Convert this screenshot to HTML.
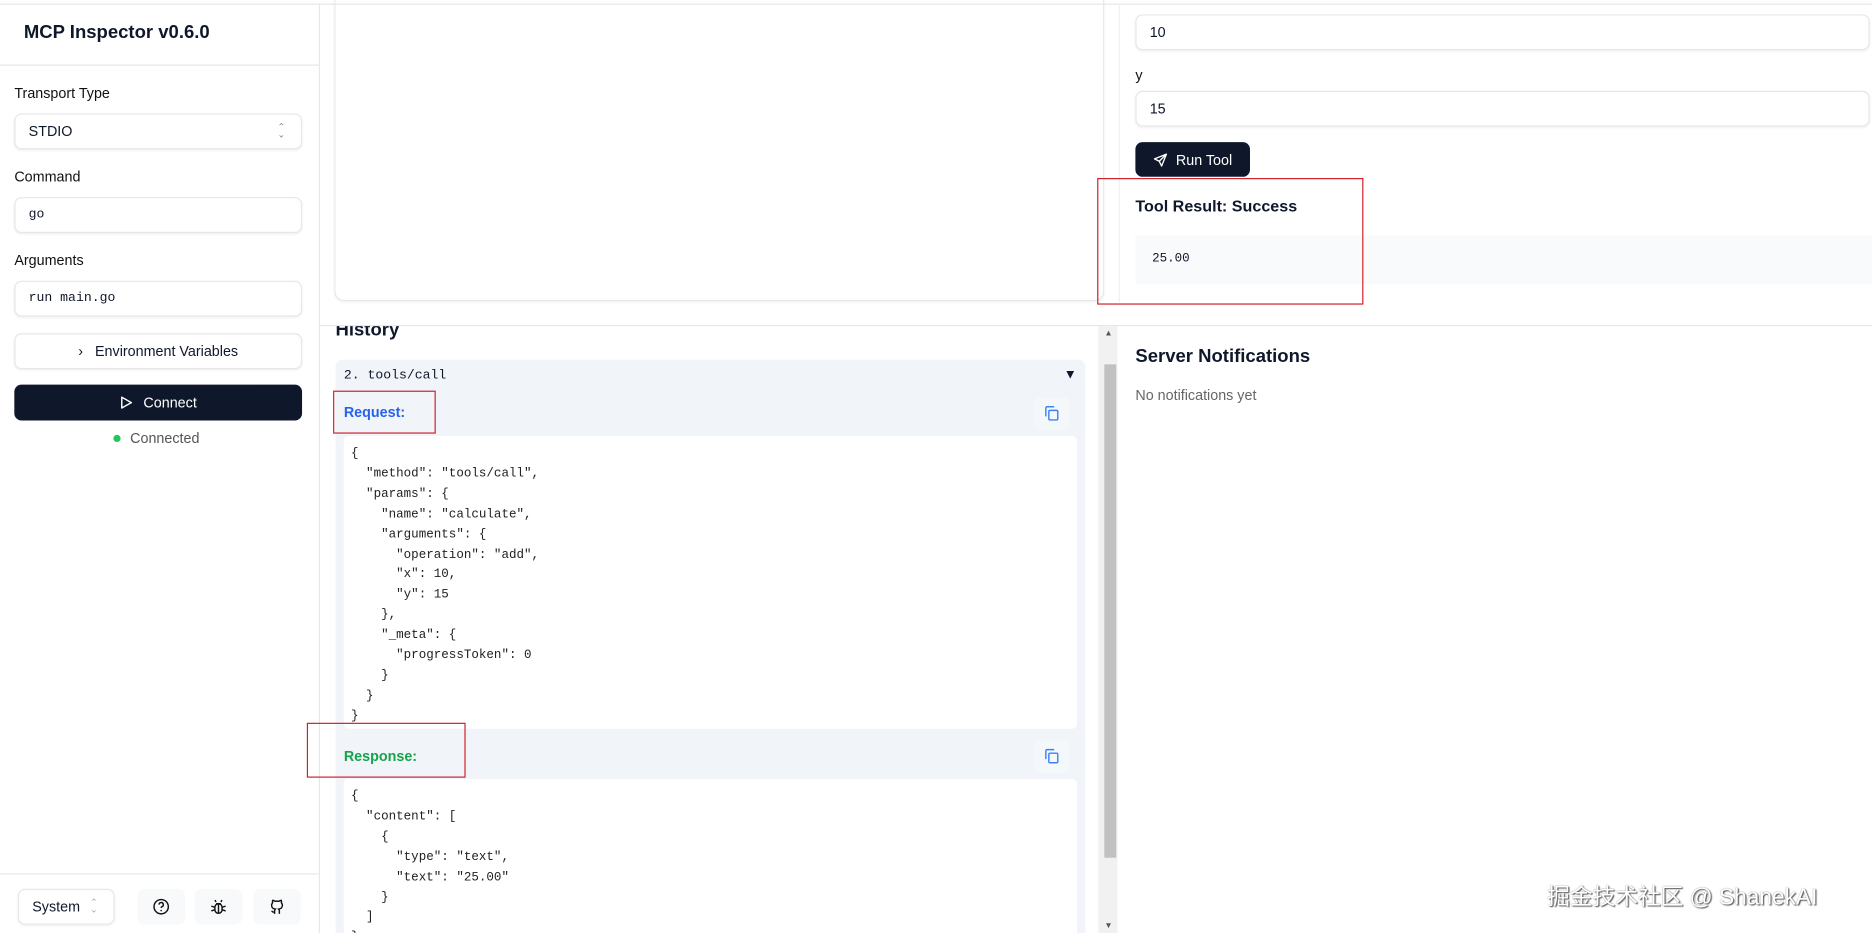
<!DOCTYPE html>
<html><head><meta charset="utf-8"><style>
html,body{margin:0;padding:0;width:1872px;height:933px;overflow:hidden;background:#fff}
#w{position:absolute;left:0;top:0;width:1568px;height:781px;transform:scale(1.19388,1.19462);transform-origin:0 0;font-family:"Liberation Sans",sans-serif;color:#0f172a;overflow:hidden}
.a{position:absolute}
.lbl{font-size:12px;color:#111}
.inp{position:absolute;border:1px solid #e5e7eb;border-radius:6px;box-shadow:0 1px 2px rgba(0,0,0,.06);background:#fff;box-sizing:border-box;font-size:12px;padding-left:11px;display:flex;align-items:center}
.mono{font-family:"Liberation Mono","DejaVu Sans Mono",monospace}
.red{position:absolute;border:1.5px solid #d0202a;box-sizing:border-box}
.code{position:absolute;background:#fff;border-radius:4px;font-family:"Liberation Mono",monospace;font-size:10.5px;line-height:16.9px;white-space:pre;padding:7px 6px;box-sizing:border-box;color:#222}
.ib{position:absolute;width:40px;height:30px;background:#f8f9fb;border-radius:6px;display:flex;align-items:center;justify-content:center}
</style></head><body><div id="w">
<div class="a" style="left:0;top:3px;width:1568px;height:1px;background:#e5e7eb"></div>
<!-- sidebar -->
<div class="a" style="left:267px;top:3px;width:1px;height:778px;background:#e5e7eb"></div>
<div class="a" style="left:20px;top:19px;font-size:15.5px;font-weight:bold">MCP Inspector v0.6.0</div>
<div class="a" style="left:0;top:54px;width:267px;height:1px;background:#e5e7eb"></div>
<div class="a lbl" style="left:12px;top:71px">Transport Type</div>
<div class="inp" style="left:12px;top:95px;width:241px;height:30px">STDIO<span style="position:absolute;right:13px;font-size:8px;color:#888;line-height:6px">⌃<br>⌄</span></div>
<div class="a lbl" style="left:12px;top:141px">Command</div>
<div class="inp mono" style="left:12px;top:165px;width:241px;height:30px;font-size:11px">go</div>
<div class="a lbl" style="left:12px;top:211px">Arguments</div>
<div class="inp mono" style="left:12px;top:235px;width:241px;height:30px;font-size:11px">run main.go</div>
<div class="inp" style="left:12px;top:279px;width:241px;height:30px;justify-content:center;padding:0"><span style="margin-right:10px">›</span>Environment Variables</div>
<div class="a" style="left:12px;top:322px;width:241px;height:30px;background:#0f172a;border-radius:6px;color:#fff;font-size:12px;display:flex;align-items:center;justify-content:center"><svg width="12" height="12" viewBox="0 0 12 12" style="margin-right:8px"><path d="M2 1.5L10 6L2 10.5Z" fill="none" stroke="#fff" stroke-width="1.2" stroke-linejoin="round"/></svg>Connect</div>
<div class="a" style="left:95px;top:364px;width:6px;height:6px;border-radius:3px;background:#22c55e"></div>
<div class="a" style="left:109px;top:360px;font-size:12px;color:#555">Connected</div>
<div class="a" style="left:0;top:731px;width:267px;height:1px;background:#e5e7eb"></div>
<div class="inp" style="left:15px;top:744px;width:81px;height:30px">System<span style="position:absolute;right:13px;font-size:8px;color:#aaa;line-height:6px">⌃<br>⌄</span></div>
<div class="ib" style="left:115px;top:744px"><svg width="14" height="14" viewBox="0 0 14 14"><circle cx="7" cy="7" r="6" fill="none" stroke="#111" stroke-width="1.2"/><path d="M5.2 5.3a1.8 1.8 0 1 1 2.4 1.7c-.5.2-.6.6-.6 1.1" fill="none" stroke="#111" stroke-width="1.2"/><circle cx="7" cy="10.2" r=".7" fill="#111"/></svg></div>
<div class="ib" style="left:163px;top:744px"><svg width="14" height="14" viewBox="0 0 14 14" fill="none" stroke="#111" stroke-width="1.2"><rect x="4" y="4.5" width="6" height="8" rx="3"/><path d="M5 3l-1-1.5M9 3l1-1.5M5 4.5h4M1 6.5l3 1M13 6.5l-3 1M1 10.5l3-1M13 10.5l-3-1M7 5v7"/></svg></div>
<div class="ib" style="left:212px;top:744px"><svg width="14" height="14" viewBox="0 0 14 14" fill="none" stroke="#111" stroke-width="1.2"><path d="M5 13v-2.5c0-.8.3-1.2.6-1.5C3.5 8.7 2.5 8 2.5 5.7c0-.8.3-1.4.8-2-.1-.4-.2-1.2.1-2 0 0 .7-.1 2 .8a7 7 0 0 1 3.2 0c1.3-.9 2-.8 2-.8.3.8.2 1.6.1 2 .5.6.8 1.2.8 2 0 2.3-1 3-3.1 3.3.3.3.6.8.6 1.5V13M5 11.5c-1.5.4-2-.5-2.5-1"/></svg></div>
<!-- top main -->
<div class="a" style="left:280px;top:0;width:645px;height:252px;border:1px solid #e5e7eb;border-top:none;border-radius:0 0 8px 8px;box-shadow:0 1px 2px rgba(0,0,0,.05);box-sizing:border-box"></div>
<div class="a" style="left:937px;top:3px;width:1px;height:250px;background:#eef0f3"></div>
<div class="inp" style="left:951px;top:12px;width:615px;height:30px">10</div>
<div class="a lbl" style="left:951px;top:56px">y</div>
<div class="inp" style="left:951px;top:76px;width:615px;height:30px">15</div>
<div class="a" style="left:951px;top:119px;width:96px;height:29px;background:#0f172a;border-radius:6px;color:#fff;font-size:12px;display:flex;align-items:center;justify-content:center"><svg width="12" height="12" viewBox="0 0 12 12" style="margin-right:7px"><path d="M11 1L1 5l4 2 2 4z M11 1L5 7" fill="none" stroke="#fff" stroke-width="1.1" stroke-linejoin="round"/></svg>Run Tool</div>
<div class="a" style="left:951px;top:165px;font-size:13.5px;font-weight:bold">Tool Result: Success</div>
<div class="a mono" style="left:951px;top:197px;width:617px;height:41px;background:#f8fafc;font-size:10.5px;padding:14px 0 0 14px;box-sizing:border-box">25.00</div>
<div class="red" style="left:919px;top:149px;width:223px;height:106px"></div>
<div class="a" style="left:268px;top:272px;width:1300px;height:1px;background:#e5e7eb"></div>
<!-- history -->
<div class="a" style="left:268px;top:273px;width:650px;height:508px;overflow:hidden">
 <div class="a" style="left:13px;top:-5px;font-size:15.5px;font-weight:bold">History</div>
</div>
<div class="a" style="left:281px;top:301px;width:628px;height:480px;background:#f1f5f9;border-radius:6px 6px 0 0"></div>
<div class="a mono" style="left:288px;top:309px;font-size:11px">2. tools/call</div>
<div class="a" style="left:891px;top:308px;font-size:11px">▼</div>
<div class="a" style="left:288px;top:338px;font-size:12px;font-weight:bold;color:#2563eb">Request:</div>
<div class="a" style="left:866px;top:333px;width:30px;height:27px;background:#f5f8fb;border-radius:5px"></div>
<svg class="a" style="left:874px;top:339px" width="14" height="14" viewBox="0 0 14 14" fill="none" stroke="#3b82f6" stroke-width="1.2"><rect x="4.5" y="4.5" width="7.5" height="8" rx="1"/><path d="M2 9.5V2.5a1 1 0 0 1 1-1h6"/></svg>
<div class="code" style="left:288px;top:365px;width:614px;height:245px">{
  "method": "tools/call",
  "params": {
    "name": "calculate",
    "arguments": {
      "operation": "add",
      "x": 10,
      "y": 15
    },
    "_meta": {
      "progressToken": 0
    }
  }
}</div>
<div class="a" style="left:288px;top:626px;font-size:12px;font-weight:bold;color:#16a34a">Response:</div>
<div class="a" style="left:866px;top:620px;width:30px;height:27px;background:#f5f8fb;border-radius:5px"></div>
<svg class="a" style="left:874px;top:626px" width="14" height="14" viewBox="0 0 14 14" fill="none" stroke="#3b82f6" stroke-width="1.2"><rect x="4.5" y="4.5" width="7.5" height="8" rx="1"/><path d="M2 9.5V2.5a1 1 0 0 1 1-1h6"/></svg>
<div class="code" style="left:288px;top:652px;width:614px;height:140px">{
  "content": [
    {
      "type": "text",
      "text": "25.00"
    }
  ]
}</div>
<div class="red" style="left:279px;top:327px;width:86px;height:36px"></div>
<div class="red" style="left:257px;top:605px;width:133px;height:46px"></div>
<!-- scrollbar -->
<div class="a" style="left:920px;top:273px;width:16px;height:508px;background:#f1f1f1"></div>
<div class="a" style="left:925px;top:305px;width:10px;height:413px;background:#c1c1c1"></div>
<div class="a" style="left:925px;top:276px;font-size:7px;color:#555">▲</div>
<div class="a" style="left:925px;top:772px;font-size:7px;color:#555">▼</div>
<!-- notifications -->
<div class="a" style="left:951px;top:290px;font-size:15.5px;font-weight:bold">Server Notifications</div>
<div class="a" style="left:951px;top:324px;font-size:12px;color:#666">No notifications yet</div>
<div class="a" style="left:1296px;top:736px;font-size:19px;color:#fff;text-shadow:1px 1px 1px #555,0 0 1px #777;font-family:'Liberation Sans','Noto Sans CJK SC',sans-serif">掘金技术社区 @ ShanekAI</div>
</div></body></html>
